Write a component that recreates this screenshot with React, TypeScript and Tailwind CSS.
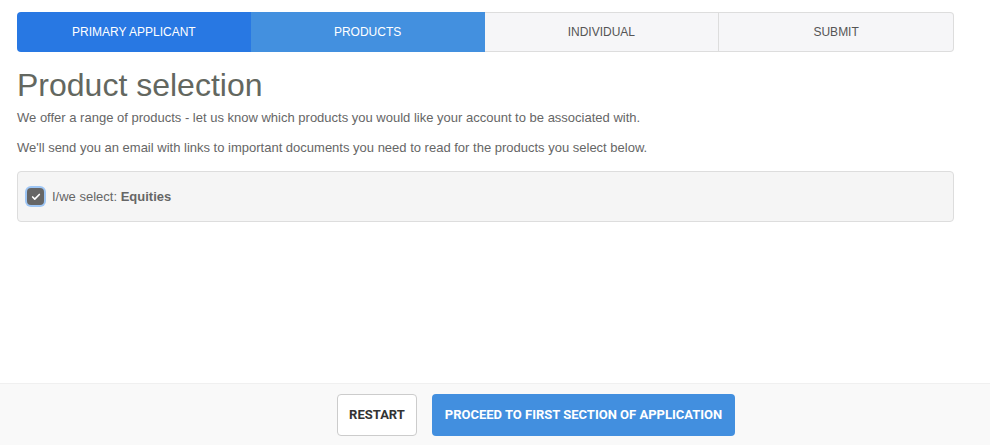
import { Check } from 'lucide-react';

const steps = [
  { label: 'PRIMARY APPLICANT', cls: 'bg-[#2878e3] text-white rounded-l-[4px]' },
  { label: 'PRODUCTS', cls: 'bg-[#4390df] text-white' },
  { label: 'INDIVIDUAL', cls: 'bg-[#f6f6f8] text-[#555] border-y border-r border-[#ddd]' },
  { label: 'SUBMIT', cls: 'bg-[#f6f6f8] text-[#555] border-y border-r border-[#ddd] rounded-r-[4px]' },
];

export default function App() {
  return (
    <div className="w-[990px] h-[445px] bg-white flex flex-col font-['Liberation_Sans',Arial,sans-serif] text-[#666]">
      <div className="flex-1 ml-[17px] pt-3 w-[937px]">
        <div className="flex h-10">
          {steps.map((s) => (
            <div
              key={s.label}
              className={`flex-1 flex items-center justify-center text-[12px] ${s.cls}`}
            >
              {s.label}
            </div>
          ))}
        </div>

        <h1 className="text-[32px] leading-none mt-[17px] text-[#636760]">Product selection</h1>
        <p className="text-[13px] mt-[9px] leading-[16px]">
          We offer a range of products - let us know which products you would like your account to be associated with.
        </p>
        <p className="text-[13px] mt-[14px] leading-[16px]">
          We'll send you an email with links to important documents you need to read for the products you select below.
        </p>

        <div className="mt-[15px] h-[51px] bg-[#f5f5f5] border border-[#ddd] rounded-[4px] flex items-center pl-[9px] gap-[8px]">
          <span className="w-[17px] h-[17px] rounded-[4px] bg-[#666] flex items-center justify-center ring-2 ring-[#9ec6f5]">
            <Check className="w-[10px] h-[10px] text-white" strokeWidth={4} />
          </span>
          <span className="text-[13px]">
            I/we select: <b className="font-bold">Equities</b>
          </span>
        </div>
      </div>

      <div className="h-[62px] bg-[#f9f9f9] border-t border-[#f0f0f0] flex items-center justify-center pl-[82px] gap-[15px] font-['Roboto',sans-serif]">
        <button className="h-[42px] w-[80px] bg-white border border-[#ccc] rounded-[4px] text-[13px] font-bold text-[#333]">
          RESTART
        </button>
        <button className="h-[42px] w-[303px] bg-[#428fdf] rounded-[4px] text-[13px] font-bold text-white">
          PROCEED TO FIRST SECTION OF APPLICATION
        </button>
      </div>
    </div>
  );
}
